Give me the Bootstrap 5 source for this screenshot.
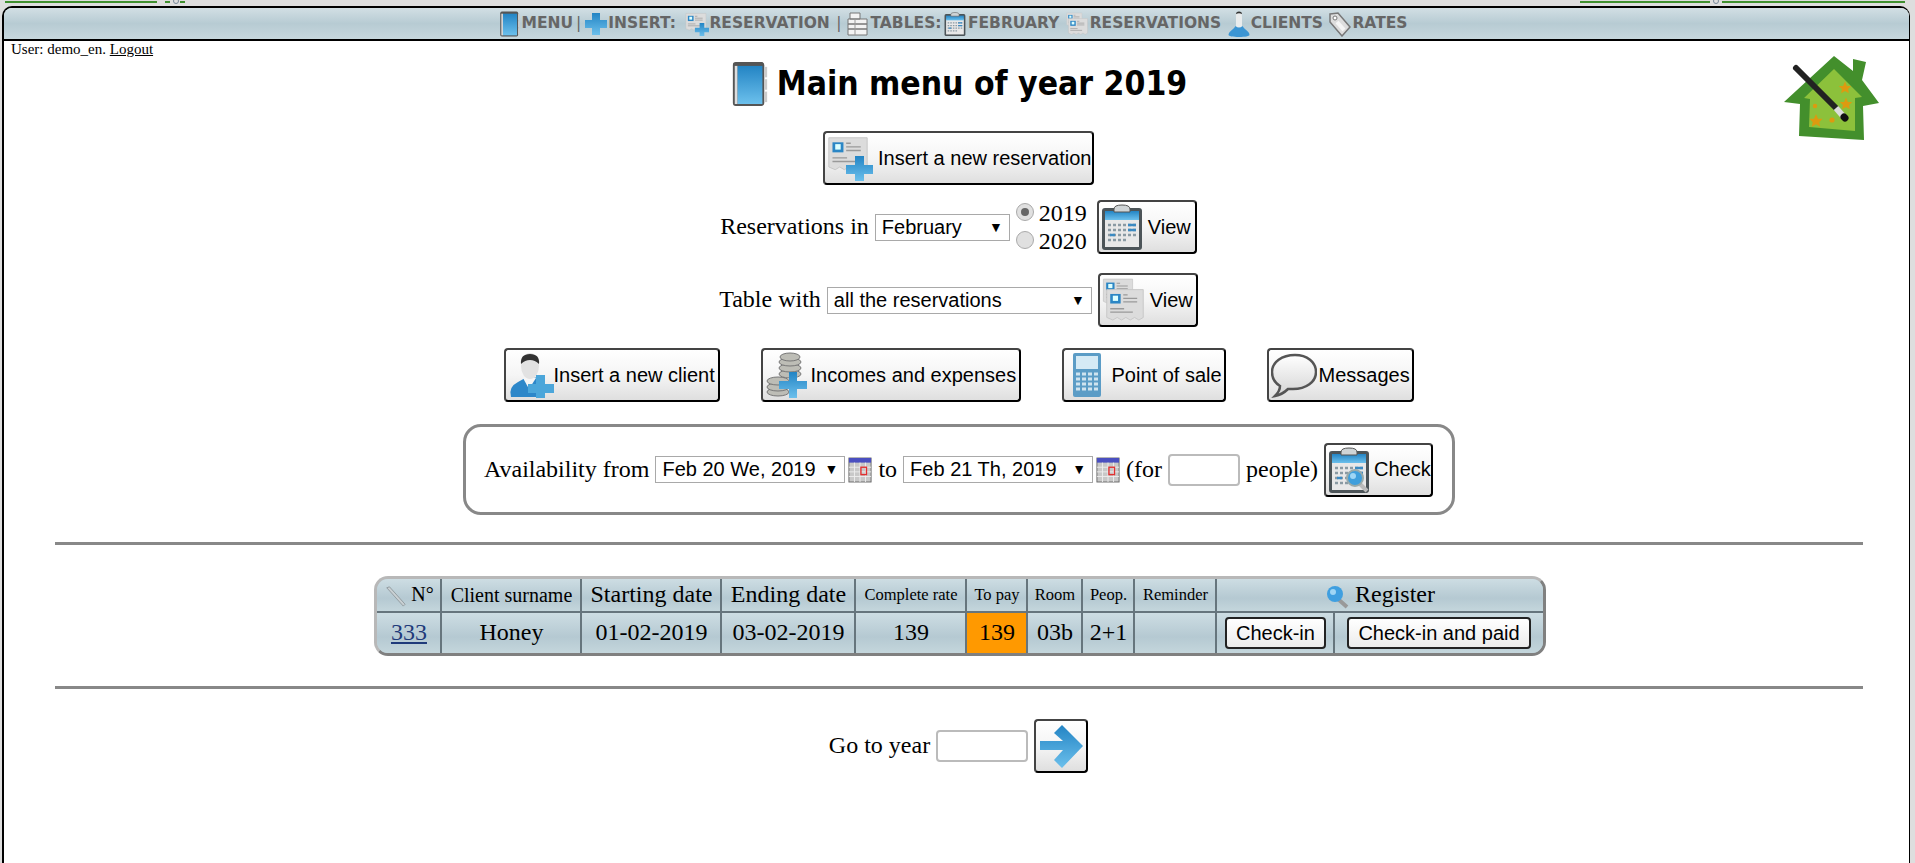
<!DOCTYPE html>
<html lang="en">
<head>
    <meta charset="UTF-8">
    <title>Main menu of year 2019</title>
    <link href="https://cdn.jsdelivr.net/npm/bootstrap@5.3.0/dist/css/bootstrap.min.css" rel="stylesheet">
    <style>
        html, body { height: 100%; overflow: hidden; }
        body {
            background: #dedede;
            font-family: "Liberation Serif", serif;
            font-size: 24px;
            line-height: 1.15;
            color: #000;
        }
        .top-strip { height: 6px; position: relative; }
        .top-strip i { position: absolute; top: 1px; height: 2px; background: #3f8f2f; }
        .top-strip .seg-a { left: 5px; width: 152px; }
        .top-strip .seg-b { left: 165px; width: 5px; }
        .top-strip .seg-c { left: 180px; width: 5px; }
        .top-strip .seg-d { left: 1580px; width: 130px; }
        .top-strip .seg-e { left: 1722px; width: 183px; }
        .top-strip .ring { top: -2px; width: 6px; height: 6px; background: none; border: 1px solid #789; border-radius: 50%; }
        .top-strip .ring-a { left: 173px; }
        .top-strip .ring-b { left: 1713px; }
        .frame {
            margin: 0 5px 0 2px;
            height: 857px;
            background: #fff;
            border: 2px solid #000;
            border-bottom: 0;
            border-right-width: 1px;
            border-radius: 10px 10px 0 0;
        }
        .menu-bar {
            height: 33px;
            padding-right: 8px;
            border-bottom: 2px solid #000;
            border-radius: 8px 8px 0 0;
            background: linear-gradient(#d2dfe4, #b7cbd3 50%, #c7d7dd);
            font-family: "DejaVu Sans", sans-serif;
            font-weight: 700;
            font-size: 15.5px;
            color: #666;
            white-space: nowrap;
        }
        .menu-bar a { color: #666; text-decoration: none; }
        .menu-bar svg { width: 24px; height: 26px; }
        .menu-bar .gap-resv { margin-left: 4px; }
        .menu-bar .gap-tables { margin-left: 5px; }
        .menu-bar .gap-feb { margin-left: -3px; }
        .menu-bar .gap-all { margin-left: 1px; }
        .pipe-a { margin: 0 3px; font-weight: 400; }
        .pipe-b { margin-left: 1px; font-weight: 400; }
        .user-line { font-size: 15px; padding: 0 0 0 7px; height: 16px; line-height: 16px; }
        .user-line a { color: #000; }
        .house-logo { position: absolute; right: 30px; top: 48px; width: 95px; height: 84px; }
        .page-body { padding-left: 4px; }
        .page-title {
            font-family: "DejaVu Sans Condensed", "DejaVu Sans", sans-serif;
            font-weight: 700;
            font-size: 33.4px;
            margin: 3px 0 0;
            height: 48px;
            gap: 7px;
        }
        .page-title svg { width: 40px; height: 46px; }
        .pic-btn {
            display: inline-flex;
            align-items: center;
            justify-content: flex-start;
            height: 54px;
            padding: 0 2px;
            background: linear-gradient(#fff, #f5f5f5 50%, #dfdfdf);
            border: 2px solid #000;
            border-top-color: #444;
            border-left-color: #444;
            border-radius: 4px;
            font-family: "Liberation Sans", sans-serif;
            font-size: 20px;
            color: #000;
            white-space: nowrap;
        }
        .pic-btn svg { width: 46px; height: 46px; flex: none; }
        .btn-wide { gap: 5px; }
        .btn-client { width: 216px; }
        .btn-coins { width: 260px; }
        .btn-calc { width: 164px; }
        .btn-talk { width: 147px; gap: 2px; }
        .btn-view { width: 100px; gap: 1px; }
        .btn-view-two { width: 100px; gap: 2px; }
        .btn-find { width: 109px; }
        .btn-go { width: 54px; }
        .plain-select {
            font-family: "Liberation Sans", sans-serif;
            font-size: 20px;
            height: 27px;
            background: #fff;
            border: 1px solid #a9a9a9;
            padding: 0 6px;
            display: inline-flex;
            align-items: center;
            justify-content: space-between;
        }
        .plain-select::after { content: "▼"; font-size: 14px; margin-left: 8px; }
        .plain-input {
            display: inline-block;
            height: 32px;
            border: 2px solid #bbb;
            border-radius: 4px;
            background: #fff;
        }
        .radio-pair { line-height: 28px; margin-right: 4px; }
        .radio-dot {
            display: inline-block; width: 18px; height: 18px; border-radius: 50%;
            border: 1px solid #aaa; background: #e0e0e0; margin-right: 5px; vertical-align: 0;
            position: relative;
        }
        .radio-dot.on::after {
            content: ""; position: absolute; left: 4px; top: 4px; width: 8px; height: 8px;
            border-radius: 50%; background: #666;
        }
        .avail-box {
            width: 992px; height: 91px;
            border: 3px solid #888;
            border-radius: 18px;
            white-space: nowrap;
            gap: 6px;
        }
        .mini-cal { width: 24px; height: 28px; flex: none; margin-left: -3px; }
        .rule { height: 3px; background: #888; margin: 0 46px 0 47px; }
        .reg-table {
            border-collapse: separate;
            border-spacing: 0;
            border: 3px solid;
            border-color: #b8b8b8 #808080 #808080 #b8b8b8;
            border-radius: 14px;
            overflow: hidden;
            text-align: center;
            background: #b9ccd4;
            table-layout: fixed;
            width: 1167px;
        }
        .reg-table th, .reg-table td {
            font-weight: 400;
            border-right: 2px solid #66757d;
            padding: 0;
            background: linear-gradient(#cddde3, #b5c9d2 60%, #c4d6dc);
            white-space: nowrap;
        }
        .reg-table th:last-child, .reg-table td:last-child { border-right: 0; }
        .reg-table th { height: 34px; border-bottom: 2px solid #66757d; }
        .reg-table td { height: 40px; }
        .reg-table a { color: #1f3a7a; }
        .reg-table .fs-s { font-size: 16.5px; }
        .reg-table .fs-m { font-size: 20px; }
        .reg-table .to-pay { background: #ff9900; }
        .w-a { width: 65px; } .w-b { width: 140px; } .w-c { width: 140px; } .w-d { width: 134px; }
        .w-e { width: 111px; } .w-f { width: 61px; } .w-g { width: 55px; } .w-h { width: 52px; }
        .w-i { width: 82px; } .w-j { width: 118px; } .w-k { width: 207px; }
        .cell-btn {
            font-family: "Liberation Sans", sans-serif;
            font-size: 20px;
            line-height: 24px;
            padding: 2px 9px;
            background: linear-gradient(#fff, #ececec);
            border: 2px solid #222;
            border-radius: 4px;
            color: #000;
        }
        .row-one { height: 54px; margin-top: 23px; }
        .row-one .pic-btn { width: 271px; }
        .row-two { margin-top: 14px; gap: 6px; }
        .row-three { margin-top: 18px; gap: 6px; }
        .row-four { margin-top: 21px; gap: 41px; }
        .row-five { margin-top: 22px; }
        .rule-one { margin-top: 27px; }
        .table-wrap { margin-top: 31px; padding-left: 3px; }
        .rule-two { margin-top: 30px; }
        .row-year { margin-top: 30px; gap: 6px; }
        .sel-month { width: 135px; }
        .sel-table { width: 265px; }
        .sel-date { width: 190px; }
        .inp-people { width: 72px; }
        .inp-year { width: 92px; }
    </style>
</head>
<body>
    <svg width="0" height="0" class="position-absolute">
        <defs>
            <linearGradient id="blu" x1="0" y1="0" x2="0" y2="1"><stop offset="0" stop-color="#2384c4"/><stop offset="1" stop-color="#6cc0ec"/></linearGradient>
            <linearGradient id="talk" x1="0" y1="0" x2="0" y2="1"><stop offset="0" stop-color="#fff"/><stop offset="1" stop-color="#d4d4d4"/></linearGradient>
            <symbol id="i-book" viewBox="0 0 42 48">
                <rect x="3" y="1" width="33" height="46" rx="3" fill="#555"/>
                <rect x="36" y="6" width="3" height="11" fill="#ccc"/><rect x="36" y="19" width="3" height="11" fill="#ccc"/><rect x="36" y="32" width="3" height="11" fill="#ccc"/>
                <rect x="5" y="5" width="3" height="40" fill="#ddd"/>
                <rect x="8" y="5" width="26" height="40" fill="url(#blu)"/>
            </symbol>
            <symbol id="i-plus" viewBox="0 0 24 24">
                <path d="M8 1h8v7h7v8h-7v7H8v-7H1V8h7z" fill="url(#blu)"/>
            </symbol>
            <symbol id="i-receipt" viewBox="0 0 46 46">
                <path d="M2 3h42v32l-5 3-5-3-5 3-5-3-5 3-5-3-5 3-7-3z" fill="#dcdcdc" stroke="#c4c4c4"/>
                <rect x="6" y="8" width="12" height="11" fill="#2b86c5"/><rect x="9" y="10" width="6" height="6" fill="#dff"/>
                <path d="M21 9h5M21 13h16M21 17h16M6 25h16M6 29h26" stroke="#999" stroke-width="1.5"/>
            </symbol>
            <symbol id="i-resv-add" viewBox="0 0 46 46">
                <use href="#i-receipt" width="42" height="42"/>
                <path d="M28 21h9v9h9v9h-9v7h-9v-7H19v-9h9z" fill="url(#blu)"/>
            </symbol>
            <symbol id="i-resv-two" viewBox="0 0 46 46">
                <use href="#i-receipt" x="0" y="0" width="32" height="32"/>
                <use href="#i-receipt" x="2" y="10" width="42" height="40"/>
            </symbol>
            <symbol id="i-tables" viewBox="0 0 24 24">
                <path d="M4 1h10v6H4zM2 7h19v5H2zM2 12h19v5H2zM2 17h19v6H2z" fill="#f3f3f3" stroke="#777"/>
                <path d="M9 7v16" stroke="#999"/>
            </symbol>
            <symbol id="i-clip" viewBox="0 0 46 46">
                <rect x="1" y="4" width="40" height="42" rx="3" fill="#4c5458"/>
                <rect x="4" y="14" width="34" height="29" fill="#e8e8e8"/>
                <rect x="4" y="7" width="34" height="9" fill="url(#blu)"/>
                <path d="M13 5q0-4 8-4t8 4v3H13z" fill="#cfd4d6" stroke="#555"/>
                <path d="M7 21h28M7 26h28M7 31h28M7 36h20" stroke="#8a9aa3" stroke-width="2.5" stroke-dasharray="3 2"/>
                <path d="M27 21h8M27 26h8M9 31h5" stroke="#3b8ac2" stroke-width="2.5"/>
            </symbol>
            <symbol id="i-clip-find" viewBox="0 0 46 46">
                <use href="#i-clip" width="46" height="46"/>
                <path d="M32 37l7 7" stroke="#bbb" stroke-width="4"/>
                <circle cx="27" cy="31" r="8" fill="#3f9fdc" stroke="#9aa" stroke-width="2"/>
                <circle cx="25" cy="29" r="3" fill="#9fd6f5"/>
            </symbol>
            <symbol id="i-person" viewBox="0 0 24 26">
                <path d="M12 1c3 0 3 3 3 6v8c2 4 7 5 7 9 0 1-4 2-10 2S2 25 2 24c0-4 5-5 7-9V7c0-3 0-6 3-6z" fill="#e9eced"/>
                <path d="M9 3c0-1.500 1-2.500 3-2.500S15 1.500 15 3c-2-1-4-1-6 0z" fill="#333"/>
                <path d="M8.500 15q3.500 3 7 0c2 4 7 5 7 9 0 1-4 2-10.500 2S1.500 25 1.500 24c0-4 5-5 7-9z" fill="#3b95d3"/>
            </symbol>
            <symbol id="i-client" viewBox="0 0 46 46">
                <path d="M3 45q-3-10 7-15l9-5h8l5 4v16z" fill="#2d87c9"/>
                <path d="M15 26l6 11 7-11q-6-4-13 0z" fill="#f5f5f5"/>
                <ellipse cx="22" cy="14" rx="9" ry="13" fill="#e2e2e2"/>
                <path d="M13 12Q12 2 22 2t9 10q-4-4-9-4t-9 4z" fill="#333"/>
                <path d="M28 23h9v9h9v9h-9v5h-9v-5h-8v-9h8z" fill="#4ba6da"/>
            </symbol>
            <symbol id="i-coins" viewBox="0 0 46 46">
                <g fill="#bdbdb6" stroke="#777">
                    <ellipse cx="13" cy="40" rx="11" ry="4"/><ellipse cx="13" cy="35" rx="11" ry="4"/><ellipse cx="13" cy="29" rx="11" ry="4"/>
                    <ellipse cx="25" cy="22" rx="11" ry="4"/><ellipse cx="25" cy="16" rx="11" ry="4"/><ellipse cx="25" cy="10" rx="11" ry="4"/><ellipse cx="25" cy="5" rx="10" ry="4"/>
                </g>
                <path d="M24 20h8v9h10v8H32v9h-8v-9H14v-8h10z" fill="url(#blu)"/>
            </symbol>
            <symbol id="i-calc" viewBox="0 0 46 46">
                <rect x="7" y="1" width="28" height="44" rx="2" fill="#5b9cc6"/>
                <rect x="10" y="4" width="22" height="13" fill="#d5eaf5"/>
                <path d="M10 22h22M10 27h22M10 32h22M10 37h22" stroke="#cfe3ef" stroke-width="3" stroke-dasharray="4 2"/>
            </symbol>
            <symbol id="i-bubble" viewBox="0 0 46 46">
                <path d="M24 3c12 0 21 7 21 17s-10 17-23 17c-2 0-3 0-5 0-3 3-8 6-13 7 3-3 5-7 5-10C4 31 1 26 1 20 1 10 11 3 24 3z" fill="url(#talk)" stroke="#555" stroke-width="2.500"/>
            </symbol>
            <symbol id="i-minical" viewBox="0 0 26 28">
                <rect x="1" y="1" width="24" height="26" fill="#c8c8c8" stroke="#666"/>
                <rect x="1" y="1" width="24" height="5" fill="#4a4fc0"/>
                <path d="M1 11h24M1 16h24M1 21h24M7 6v21M13 6v21M19 6v21" stroke="#eee"/>
                <rect x="14" y="11" width="6" height="8" fill="none" stroke="#e03030" stroke-width="1.5"/>
            </symbol>
            <symbol id="i-pencil" viewBox="0 0 24 24">
                <path d="M3 3l3-1 17 19-2 2z" fill="#c9d0d3" stroke="#8f999e"/>
            </symbol>
            <symbol id="i-lens" viewBox="0 0 24 24">
                <path d="M13 14l9 8" stroke="#999" stroke-width="4"/>
                <circle cx="10" cy="9" r="8" fill="#3f9fe0"/><circle cx="8" cy="7" r="3" fill="#9fd6f5"/>
            </symbol>
            <symbol id="i-arrow" viewBox="0 0 46 46">
                <path d="M24 2l21 21-21 22-8-8 9-10H2V18h23l-9-8z" fill="url(#blu)"/>
            </symbol>
            <symbol id="i-tag" viewBox="0 0 24 26">
                <path d="M2 3l8-1 12 14-8 9L2 11z" fill="#ddd" stroke="#777" stroke-width="1.5"/>
                <path d="M9 11l7 8" stroke="#f5f5f5" stroke-width="4"/>
                <circle cx="7" cy="7" r="2" fill="#fff" stroke="#777"/>
            </symbol>
            <path id="star" d="M0-10L2.900-3.100 9.500-3.100 4.700 1.500 5.900 8.100 0 4.500-5.900 8.100-4.700 1.500-9.500-3.100-2.900-3.100z" fill="#dd9a10"/>
        </defs>
    </svg>

    <div class="top-strip">
        <i class="seg-a"></i><i class="seg-b"></i><i class="ring ring-a"></i><i class="seg-c"></i>
        <i class="seg-d"></i><i class="ring ring-b"></i><i class="seg-e"></i>
    </div>

    <div class="frame position-relative">
        <nav class="menu-bar d-flex align-items-center justify-content-center">
            <svg><use href="#i-book"/></svg><a href="#">MENU</a><span class="pipe-a">|</span>
            <svg><use href="#i-plus"/></svg><a href="#">INSERT:</a>&nbsp;
            <svg class="gap-resv"><use href="#i-resv-add"/></svg><a href="#">RESERVATION</a>&nbsp;<span class="pipe-b">|</span>
            <svg class="gap-tables"><use href="#i-tables"/></svg><a href="#">TABLES:</a>&nbsp;
            <svg class="gap-feb"><use href="#i-clip"/></svg><a href="#">FEBRUARY</a>&nbsp;
            <svg class="gap-all"><use href="#i-resv-two"/></svg><a href="#">RESERVATIONS</a>&nbsp;
            <svg><use href="#i-person"/></svg><a href="#">CLIENTS</a>&nbsp;
            <svg><use href="#i-tag"/></svg><a href="#">RATES</a>
        </nav>
        <div class="user-line">User: demo_en. <a href="#">Logout</a></div>

        <svg class="house-logo" viewBox="0 0 95 84">
            <path d="M0 46L50 0l19 15V3l13 3-4 18 17 23-16 3 1 34-65-4 1-32z" fill="#438f2c"/>
            <path d="M20 42L50 13l28 28-7 1v33l-46-4 1-28z" fill="#8cc13b"/>
            <use href="#star" transform="translate(61 32) scale(.65)"/>
            <use href="#star" transform="translate(62 48) scale(.65)"/>
            <use href="#star" transform="translate(32 65) scale(.7)"/>
            <circle cx="31" cy="50" r="2.200" fill="#dd9a10"/><circle cx="48" cy="64" r="2.600" fill="#dd9a10"/>
            <path d="M12 12l40 40" stroke="#222" stroke-width="6" stroke-linecap="round"/>
            <path d="M52 52l7 8" stroke="#ddd" stroke-width="6"/><path d="M60 61l1 1" stroke="#111" stroke-width="7" stroke-linecap="round"/>
        </svg>

        <main class="page-body">
            <h1 class="page-title d-flex align-items-center justify-content-center">
                <svg><use href="#i-book"/></svg><span>Main menu of year 2019</span>
            </h1>

            <div class="d-flex justify-content-center row-one">
                <button class="pic-btn btn-wide"><svg><use href="#i-resv-add"/></svg>Insert a new reservation</button>
            </div>

            <div class="d-flex justify-content-center align-items-center row-two">
                <span>Reservations in</span>
                <span class="plain-select sel-month">February</span>
                <span class="radio-pair">
                    <span class="d-block"><span class="radio-dot on"></span>2019</span>
                    <span class="d-block"><span class="radio-dot"></span>2020</span>
                </span>
                <button class="pic-btn btn-view"><svg><use href="#i-clip"/></svg>View</button>
            </div>

            <div class="d-flex justify-content-center align-items-center row-three">
                <span>Table with</span>
                <span class="plain-select sel-table">all the reservations</span>
                <button class="pic-btn btn-view-two"><svg><use href="#i-resv-two"/></svg>View</button>
            </div>

            <div class="d-flex justify-content-center row-four">
                <button class="pic-btn btn-client"><svg><use href="#i-client"/></svg>Insert a new client</button>
                <button class="pic-btn btn-coins"><svg><use href="#i-coins"/></svg>Incomes and expenses</button>
                <button class="pic-btn btn-calc"><svg><use href="#i-calc"/></svg>Point of sale</button>
                <button class="pic-btn btn-talk"><svg><use href="#i-bubble"/></svg>Messages</button>
            </div>

            <div class="d-flex justify-content-center row-five">
                <div class="avail-box d-flex align-items-center justify-content-center">
                    <span>Availability from</span>
                    <span class="plain-select sel-date">Feb 20 We, 2019</span><svg class="mini-cal"><use href="#i-minical"/></svg>
                    <span>to</span>
                    <span class="plain-select sel-date">Feb 21 Th, 2019</span><svg class="mini-cal"><use href="#i-minical"/></svg>
                    <span>(for</span>
                    <span class="plain-input inp-people"></span>
                    <span>people)</span>
                    <button class="pic-btn btn-find"><svg><use href="#i-clip-find"/></svg>Check</button>
                </div>
            </div>

            <div class="rule rule-one"></div>

            <div class="d-flex justify-content-center table-wrap">
                <table class="reg-table">
                    <colgroup>
                        <col class="w-a"><col class="w-b"><col class="w-c"><col class="w-d"><col class="w-e"><col class="w-f">
                        <col class="w-g"><col class="w-h"><col class="w-i"><col class="w-j"><col class="w-k">
                    </colgroup>
                    <tr>
                        <th class="fs-m"><svg width="22" height="22"><use href="#i-pencil"/></svg> N°</th>
                        <th class="fs-m">Client surname</th>
                        <th>Starting date</th>
                        <th>Ending date</th>
                        <th class="fs-s">Complete rate</th>
                        <th class="fs-s">To pay</th>
                        <th class="fs-s">Room</th>
                        <th class="fs-s">Peop.</th>
                        <th class="fs-s">Reminder</th>
                        <th colspan="2"><svg width="24" height="24"><use href="#i-lens"/></svg> Register</th>
                    </tr>
                    <tr>
                        <td><a href="#">333</a></td>
                        <td>Honey</td>
                        <td>01-02-2019</td>
                        <td>03-02-2019</td>
                        <td>139</td>
                        <td class="to-pay">139</td>
                        <td>03b</td>
                        <td>2+1</td>
                        <td></td>
                        <td><button class="cell-btn">Check-in</button></td>
                        <td><button class="cell-btn">Check-in and paid</button></td>
                    </tr>
                </table>
            </div>

            <div class="rule rule-two"></div>

            <div class="d-flex justify-content-center align-items-center row-year">
                <span>Go to year</span>
                <span class="plain-input inp-year"></span>
                <button class="pic-btn btn-go"><svg><use href="#i-arrow"/></svg></button>
            </div>
        </main>
    </div>
</body>
</html>
